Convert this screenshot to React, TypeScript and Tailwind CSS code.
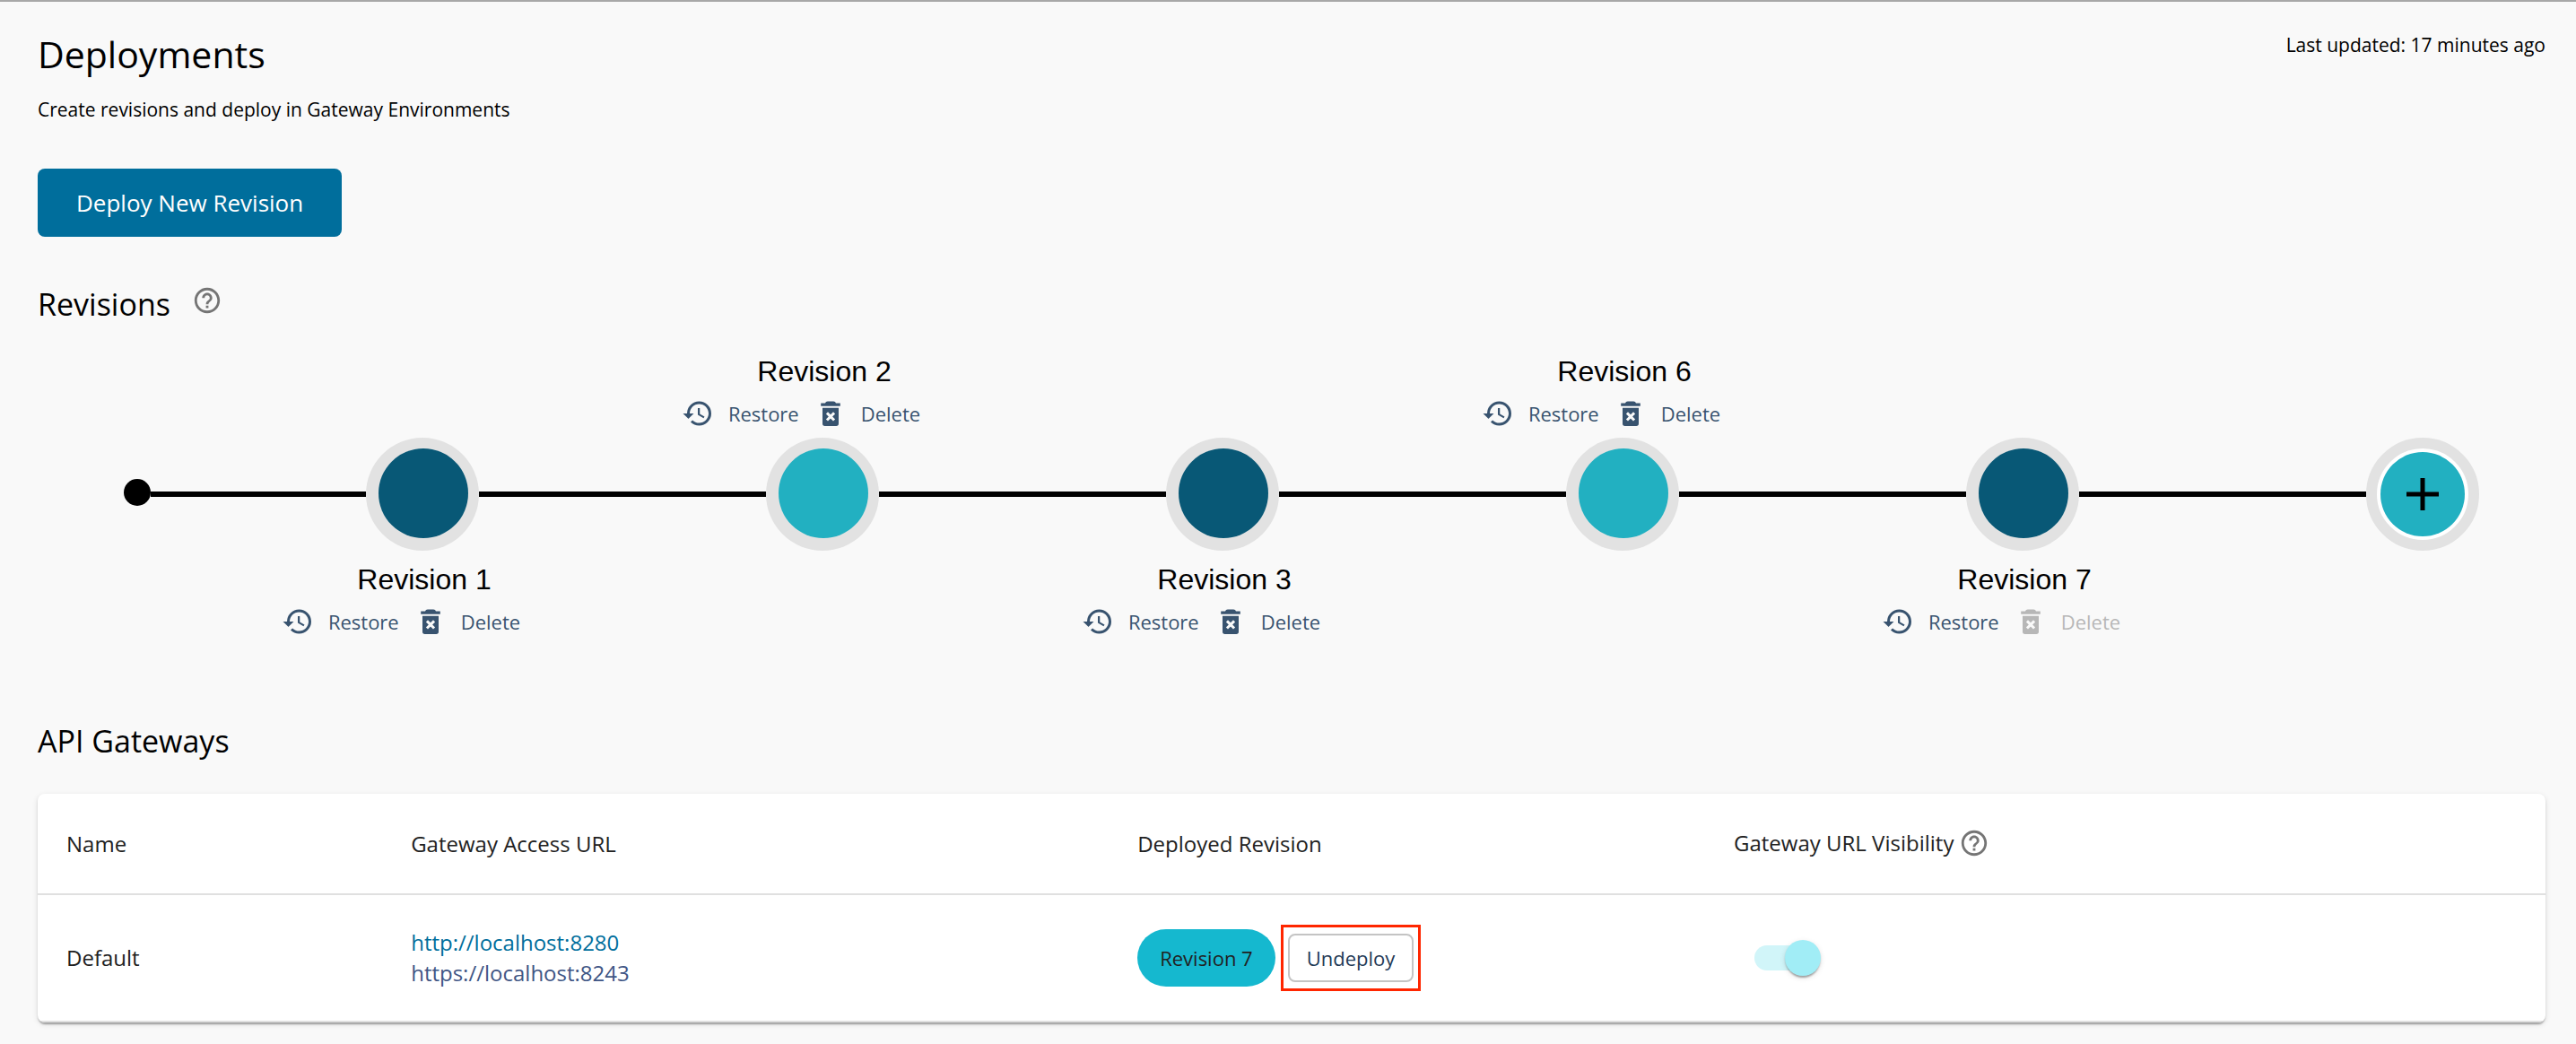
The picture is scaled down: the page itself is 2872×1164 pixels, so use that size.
import { Fragment } from "react";
import { MdHelpOutline, MdRestore } from "react-icons/md";

type Revision = {
  name: string;
  deployed: boolean;
  side: "above" | "below";
  canDelete: boolean;
};

const revisions: Revision[] = [
  { name: "Revision 1", deployed: false, side: "below", canDelete: true },
  { name: "Revision 2", deployed: true, side: "above", canDelete: true },
  { name: "Revision 3", deployed: false, side: "below", canDelete: true },
  { name: "Revision 6", deployed: true, side: "above", canDelete: true },
  { name: "Revision 7", deployed: false, side: "below", canDelete: false },
];

function TrashIcon() {
  return (
    <svg viewBox="0 0 24 24" className="size-9" aria-hidden>
      <path
        fill="currentColor"
        d="M4.800 4.300h3.200q.4-1.300 1.800-1.300h4.400q1.400 0 1.800 1.300h3.200v2.200h-14.400zM6 7.800h12v11.700q0 1.800-1.800 1.800h-8.400q-1.800 0-1.800-1.800z"
      />
      <path
        fill="none"
        stroke="#f9f9f9"
        strokeWidth="2"
        d="M9.300 11.600l5.400 5.400M14.700 11.600l-5.400 5.400"
      />
    </svg>
  );
}

function RevisionLabel({ revision }: { revision: Revision }) {
  return (
    <div className="flex w-max flex-col items-center">
      <h3 className="pl-1 font-['Liberation_Sans',Arial,sans-serif] text-[32px] leading-10 text-black">
        {revision.name}
      </h3>
      <div className="flex items-center pr-12 text-[22px] leading-[54px] text-[#38536f]">
        <button type="button" className="flex items-center gap-4">
          <MdRestore className="size-9" />
          Restore
        </button>
        <button
          type="button"
          disabled={!revision.canDelete}
          className="ml-[17px] flex items-center gap-4 disabled:text-[#b7b7b7]"
        >
          <TrashIcon />
          Delete
        </button>
      </div>
    </div>
  );
}

function RevisionNode({ revision }: { revision: Revision }) {
  return (
    <li className="flex w-[126px] shrink-0 flex-col items-center">
      <div className="flex h-[100px] flex-col items-center justify-end">
        {revision.side === "above" && <RevisionLabel revision={revision} />}
      </div>
      <div className="size-[126px] rounded-full bg-[#e2e2e2] pt-3 pl-[14px]">
        <div
          className={
            revision.deployed
              ? "size-[100px] rounded-full bg-[#22b0c1]"
              : "size-[100px] rounded-full bg-[#085876]"
          }
        />
      </div>
      <div className="flex h-[100px] flex-col items-center justify-start pt-3">
        {revision.side === "below" && <RevisionLabel revision={revision} />}
      </div>
    </li>
  );
}

function Timeline() {
  return (
    <ol className="mt-[25px] flex items-center pr-[74px] pl-24">
      <li aria-hidden className="mb-1 size-[30px] shrink-0 rounded-full bg-black" />
      {revisions.map((revision, i) => (
        <Fragment key={revision.name}>
          <li
            aria-hidden
            className={i === 0 ? "h-1.5 flex-[3] bg-black" : "h-1.5 flex-[4] bg-black"}
          />
          <RevisionNode revision={revision} />
        </Fragment>
      ))}
      <li aria-hidden className="h-1.5 flex-[4] bg-black" />
      <li className="shrink-0">
        <button
          type="button"
          aria-label="Create revision"
          className="flex size-[126px] items-center justify-center rounded-full border-[12px] border-[#e2e2e2] bg-white p-1"
        >
          <span className="flex size-full items-center justify-center rounded-full bg-[#22b0c1]">
            <svg viewBox="0 0 36 36" className="size-9" aria-hidden>
              <path d="M15.500 0h5v15.500h15.500v5h-15.500v15.500h-5v-15.500h-15.500v-5h15.500z" fill="#000" />
            </svg>
          </span>
        </button>
      </li>
    </ol>
  );
}

function GatewayTable() {
  return (
    <div className="mt-[35px] overflow-hidden rounded-lg bg-white shadow-[0_4px_2px_-2px_rgba(0,0,0,0.2),0_2px_2px_rgba(0,0,0,0.14),0_2px_6px_rgba(0,0,0,0.12)]">
      <table className="w-full table-fixed text-left text-2xl leading-[34px] text-[#212121]">
        <colgroup>
          <col className="w-[13.74%]" />
          <col className="w-[28.97%]" />
          <col className="w-[23.78%]" />
          <col />
        </colgroup>
        <thead>
          <tr className="h-28 border-b-2 border-[#e0e0e0]">
            <th className="px-8 font-normal">Name</th>
            <th className="px-8 font-normal">Gateway Access URL</th>
            <th className="px-8 font-normal">Deployed Revision</th>
            <th className="px-8 pb-0.5 font-normal">
              <span className="flex items-center gap-1.5">
                Gateway URL Visibility
                <MdHelpOutline className="size-[34px] text-[#757575]" />
              </span>
            </th>
          </tr>
        </thead>
        <tbody>
          <tr className="h-[142px] border-b-2 border-[#e0e0e0]">
            <td className="px-8">Default</td>
            <td className="px-8">
              <a href="#http" className="block text-[#006e9c]">
                http://localhost:8280
              </a>
              <a href="#https" className="block text-[#3f5685]">
                https://localhost:8243
              </a>
            </td>
            <td className="px-8">
              <div className="flex items-center gap-1.5 text-[22px]">
                <span className="flex h-16 items-center rounded-full bg-[#15b8cf] px-[25px]">
                  Revision 7
                </span>
                <span className="border-[3px] border-[#ff2600] px-[5px] py-[7px]">
                  <button
                    type="button"
                    className="flex h-[54px] items-center rounded-lg border-2 border-[#c4c4c4] px-[19px] text-[#1f3a56]"
                  >
                    Undeploy
                  </button>
                </span>
              </div>
            </td>
            <td className="px-8">
              <label className="relative ml-[23px] flex h-10 w-[74px] items-center">
                <input
                  type="checkbox"
                  role="switch"
                  defaultChecked
                  disabled
                  aria-label="Gateway URL Visibility"
                  className="h-7 w-[68px] appearance-none rounded-full bg-[#d1f5f9]"
                />
                <span className="absolute right-0 size-10 rounded-full bg-[#a1edf6] shadow-[0_4px_2px_-2px_rgba(0,0,0,0.2),0_2px_2px_rgba(0,0,0,0.14),0_2px_6px_rgba(0,0,0,0.12)]" />
              </label>
            </td>
          </tr>
        </tbody>
      </table>
    </div>
  );
}

export default function App() {
  return (
    <main className="min-h-screen border-t-2 border-[#a8a8a8] bg-[#f9f9f9] pt-8 pr-[34px] pb-5 pl-[42px] font-['Open_Sans',sans-serif] text-black">
      <header className="flex items-start justify-between">
        <div>
          <h1 className="text-[41px] leading-[52px]">Deployments</h1>
          <p className="mt-5 text-[21px] leading-8">
            Create revisions and deploy in Gateway Environments
          </p>
        </div>
        <p className="text-[21px] leading-8">Last updated: 17 minutes ago</p>
      </header>
      <button
        type="button"
        className="mt-[50px] h-[76px] rounded-lg bg-[#006e9c] px-[43px] text-[26px] text-white"
      >
        Deploy New Revision
      </button>
      <section>
        <div className="mt-[51px] flex items-center gap-6">
          <h2 className="text-[34px] leading-[48px]">Revisions</h2>
          <MdHelpOutline className="mb-2 size-[34px] text-[#757575]" />
        </div>
        <Timeline />
      </section>
      <section>
        <h2 className="mt-[88px] text-[34px] leading-[48px]">API Gateways</h2>
        <GatewayTable />
      </section>
    </main>
  );
}
